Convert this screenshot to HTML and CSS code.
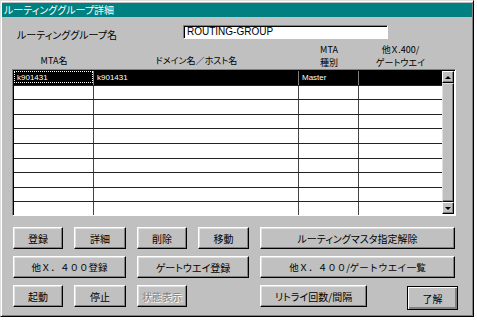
FILE: index.html
```html
<!DOCTYPE html>
<html lang="ja">
<head>
    <meta charset="UTF-8">
    <title>ルーティンググループ詳細</title>
    <link rel="stylesheet" href="styles.css">
</head>
<body>
    <div class="window">
        <div class="titlebar">ルーティンググループ詳細</div>
        <div class="content">
            <div class="name-row">
                <span class="name-label">ルーティンググループ名</span>
                <div class="textbox">ROUTING-GROUP</div>
            </div>

            <div class="list-head">
                <div class="head-low">MTA名</div>
                <div class="head-low">ドメイン名／ホスト名</div>
                <div>MTA<br>種別</div>
                <div>他Ｘ.400/<br>ゲートウエイ</div>
            </div>

            <div class="list">
                <div class="rows">
                    <div class="row selected">
                        <div class="cell"><span class="focus">k901431</span></div>
                        <div class="cell">k901431</div>
                        <div class="cell">Master</div>
                        <div class="cell"></div>
                    </div>
                    <div class="row"><div class="cell"></div><div class="cell"></div><div class="cell"></div><div class="cell"></div></div>
                    <div class="row"><div class="cell"></div><div class="cell"></div><div class="cell"></div><div class="cell"></div></div>
                    <div class="row"><div class="cell"></div><div class="cell"></div><div class="cell"></div><div class="cell"></div></div>
                    <div class="row"><div class="cell"></div><div class="cell"></div><div class="cell"></div><div class="cell"></div></div>
                    <div class="row"><div class="cell"></div><div class="cell"></div><div class="cell"></div><div class="cell"></div></div>
                    <div class="row"><div class="cell"></div><div class="cell"></div><div class="cell"></div><div class="cell"></div></div>
                    <div class="row"><div class="cell"></div><div class="cell"></div><div class="cell"></div><div class="cell"></div></div>
                    <div class="row"><div class="cell"></div><div class="cell"></div><div class="cell"></div><div class="cell"></div></div>
                    <div class="row"><div class="cell"></div><div class="cell"></div><div class="cell"></div><div class="cell"></div></div>
                </div>
                <div class="scrollbar">
                    <div class="sb-btn"><span class="arrow-up"></span></div>
                    <div class="sb-thumb"></div>
                    <div class="sb-btn"><span class="arrow-down"></span></div>
                </div>
            </div>

            <div class="buttons">
                <button class="btn">登録</button>
                <button class="btn">詳細</button>
                <button class="btn">削除</button>
                <button class="btn">移動</button>
                <button class="btn">ルーティングマスタ指定解除</button>

                <button class="btn span2 wide">他Ｘ．４００登録</button>
                <button class="btn span2">ゲートウエイ登録</button>
                <button class="btn wide">他Ｘ．４００/ゲートウエイ一覧</button>

                <button class="btn">起動</button>
                <button class="btn">停止</button>
                <button class="btn" disabled>状態表示</button>
                <div></div>
                <div class="last-cell">
                    <button class="btn retry">リトライ回数/間隔</button>
                    <button class="btn default">了解</button>
                </div>
            </div>
        </div>
    </div>
</body>
</html>
```

FILE: styles.css
```css
body {
    margin: 0;
    background: #fff;
    font-family: "Noto Sans CJK JP", sans-serif;
    font-size: 10px;
    font-feature-settings: "palt";
}

.window {
    width: 474px;
    height: 317px;
    box-sizing: border-box;
    background: #c0c0c0;
    border: 1px solid;
    border-color: #dfdfdf #000 #000 #dfdfdf;
    box-shadow: inset 1px 1px #fff, inset -1px -1px #808080;
    padding: 2px 1px;
}

.titlebar {
    height: 14px;
    line-height: 14px;
    padding-left: 2px;
    background: #008080;
    color: #fff;
    font-size: 10px;
}

.content {
    padding: 8px 0 0 10px;
}

.name-row {
    display: flex;
    align-items: center;
    height: 14px;
}

.name-label {
    width: 171px;
    padding-left: 5px;
    box-sizing: border-box;
    margin-top: 4px;
}

.textbox {
    width: 205px;
    height: 14px;
    box-sizing: border-box;
    background: #fff;
    border: 1px solid;
    border-color: #808080 #fff #fff #808080;
    box-shadow: inset 1px 1px #000;
    padding-left: 3px;
    font-family: "Liberation Sans", sans-serif;
    font-size: 10px;
    line-height: 12px;
}

.list-head {
    display: grid;
    grid-template-columns: 80px 205px 60px 83px;
    align-items: end;
    height: 27px;
    margin: 3px 0 0 2px;
    text-align: center;
    line-height: 13px;
    font-size: 9px;
}

.list-head .head-low {
    padding-bottom: 2px;
}

.list {
    display: flex;
    width: 444px;
    height: 147px;
    box-sizing: border-box;
    border: 1px solid;
    border-color: #808080 #fff #fff #808080;
    box-shadow: inset 1px 1px #000;
    padding: 1px 0 0 1px;
    background: #fff;
    overflow: hidden;
}

.rows {
    width: 428px;
}

.row {
    display: grid;
    grid-template-columns: 80px 205px 60px 83px;
    height: 14.6px;
    box-sizing: border-box;
    border-bottom: 1px solid #222;
}

.cell {
    border-right: 1px solid #444;
    padding-left: 3px;
    font-family: "Liberation Sans", sans-serif;
    font-size: 8px;
    line-height: 13px;
}

.cell:last-child {
    border-right: none;
}

.row.selected {
    background: #000;
    color: #fff;
}

.row.selected .cell {
    border-right-color: #808080;
}

.focus {
    display: block;
    margin-left: -3px;
    padding-left: 3px;
    height: 12px;
    outline: 1px dotted #fff;
    outline-offset: -1px;
}

.scrollbar {
    width: 12px;
    display: flex;
    flex-direction: column;
    background: #c0c0c0;
    height: 143px;
}

.sb-btn,
.sb-thumb {
    box-sizing: border-box;
    background: #c0c0c0;
    border: 1px solid;
    border-color: #fff #000 #000 #fff;
    box-shadow: inset -1px -1px #808080;
}

.sb-btn {
    height: 12px;
    display: flex;
    align-items: center;
    justify-content: center;
}

.sb-thumb {
    flex: 1;
    border-color: #dfdfdf #000 #000 #dfdfdf;
}

.arrow-up,
.arrow-down {
    width: 0;
    height: 0;
    border-left: 3px solid transparent;
    border-right: 3px solid transparent;
}

.arrow-up {
    border-bottom: 3px solid #000;
}

.arrow-down {
    border-top: 3px solid #000;
}

.buttons {
    display: grid;
    grid-template-columns: 50px 52px 50px 51px 195px;
    grid-auto-rows: 22px;
    column-gap: 11px;
    row-gap: 7px;
    margin: 11px 0 0 1px;
}

.span2 {
    grid-column: span 2;
}

.btn {
    font-family: inherit;
    font-size: 10px;
    font-feature-settings: "palt";
    color: #000;
    background: #c0c0c0;
    border: 1px solid;
    border-color: #fff #000 #000 #fff;
    box-shadow: inset -1px -1px #808080, inset 1px 1px #dfdfdf;
    padding: 0;
    height: 22px;
}

.btn.wide {
    font-feature-settings: normal;
    font-size: 9.5px;
}

.btn:disabled {
    color: #808080;
    text-shadow: 1px 1px #fff;
}

.last-cell {
    display: flex;
    justify-content: space-between;
    margin-right: -3px;
}

.retry {
    width: 107px;
}

.default {
    width: 51px;
    height: 24px;
    margin-top: 1px;
    border-color: #000;
    box-shadow: inset 1px 1px #fff, inset -1px -1px #808080, inset -2px -2px #808080;
}
```
